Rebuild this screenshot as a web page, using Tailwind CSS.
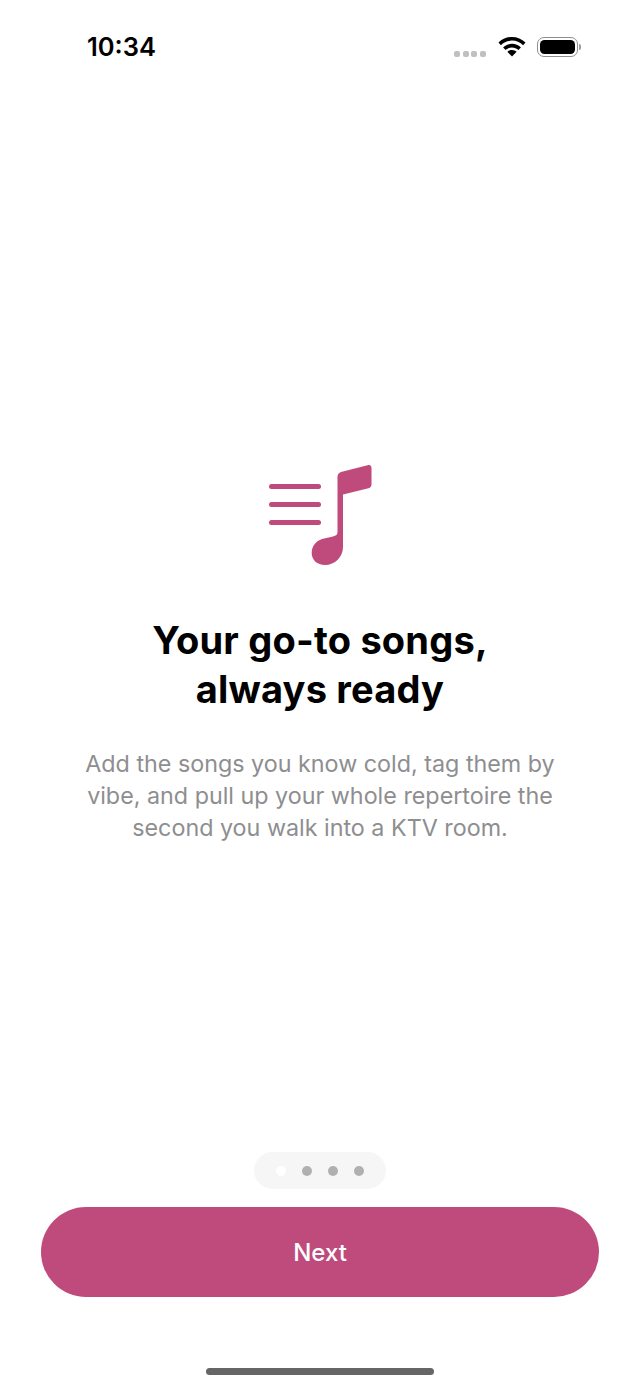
<!doctype html>
<html>
<head>
<meta charset="utf-8">
<script src="https://cdn.jsdelivr.net/npm/@tailwindcss/browser@4"></script>
</head>
<body class="bg-white">
<div class="flex flex-col w-[640px] h-[1387px] overflow-hidden bg-white font-['Inter',sans-serif]">
  <div class="flex items-center justify-between h-[28px] mt-[33px] pl-[87px] pr-[59px]">
    <span class="text-[25.5px] leading-[28px] font-semibold text-black">10:34</span>
    <div class="flex items-center">
      <div class="flex gap-[2.6px] mt-[14px] mr-[11px]">
        <span class="size-[6px] rounded-[2px] bg-[#c0c0c0]"></span>
        <span class="size-[6px] rounded-[2px] bg-[#c0c0c0]"></span>
        <span class="size-[6px] rounded-[2px] bg-[#c0c0c0]"></span>
        <span class="size-[6px] rounded-[2px] bg-[#c0c0c0]"></span>
      </div>
      <svg class="mr-[10px] -mt-[2px]" width="30" height="22" viewBox="0 0 30 22" fill="#000">
        <path d="M15 2C9.800 2 5.200 4 1.500 7.500L3.900 10.200C6.800 7.400 10.700 5.600 15 5.600s8.200 1.800 11.100 4.600l2.400-2.700C24.800 4 20.200 2 15 2Z"/>
        <path d="M15 8.800c-3.400 0-6.500 1.300-8.900 3.600l2.500 2.700c1.700-1.600 3.900-2.600 6.400-2.600s4.700 1 6.400 2.600l2.500-2.700C21.500 10.100 18.400 8.800 15 8.800Z"/>
        <path d="M15 15c-1.800 0-3.400.7-4.600 1.800L15 21.600l4.600-4.800C18.400 15.700 16.800 15 15 15Z"/>
      </svg>
      <div class="flex items-center">
        <div class="w-[41px] h-[20px] rounded-[7px] border-[1.5px] border-[#8e8e8e] p-[2px]">
          <div class="w-full h-full rounded-[4.5px] bg-black"></div>
        </div>
        <div class="w-[2px] h-[6px] rounded-r-full bg-[#9a9a9a] ml-[1px]"></div>
      </div>
    </div>
  </div>

  <div class="flex flex-col items-center mt-[402px]">
    <svg width="104" height="102" viewBox="0 0 104 102" fill="#bf4b7d">
      <rect x="1" y="21" width="52" height="5" rx="2.5"/>
      <rect x="1" y="39" width="52" height="5" rx="2.5"/>
      <rect x="1" y="57" width="52" height="5" rx="2.5"/>
      <path d="M69.500 14C69.500 11 71 9.500 73 8.900L99.500 2.200C102 1.600 103.500 2.500 103.500 5V21C103.500 23.500 102.500 24.700 100.500 25.200L75 31.500V84C75 94 67 102 57 102C49 102 43.700 97 43.700 90C43.700 83 48 78 54 76L65 73.500C68 72.800 69.500 71.500 69.500 69Z"/>
    </svg>
    <h1 class="mt-[51px] text-[38px] leading-[49px] font-bold text-black text-center tracking-[0.2px]">Your go-to songs,<br>always ready</h1>
    <p class="mt-[34px] text-[23.3px] leading-[32px] text-[#8e8e90] text-center">Add the songs you know cold, tag them by<br>vibe, and pull up your whole repertoire the<br>second you walk into a KTV room.</p>
  </div>

  <div class="flex flex-col items-center mt-auto">
    <div class="flex items-center justify-center gap-[16px] w-[132px] h-[37px] rounded-full bg-[#f6f6f6]">
      <span class="size-[10px] rounded-full bg-white"></span>
      <span class="size-[10px] rounded-full bg-[#b0b0b0]"></span>
      <span class="size-[10px] rounded-full bg-[#b0b0b0]"></span>
      <span class="size-[10px] rounded-full bg-[#b0b0b0]"></span>
    </div>
    <button class="mt-[18px] pt-[2px] w-[558px] h-[90px] rounded-[45px] bg-[#bf4b7d] text-white text-[24px] font-medium">Next</button>
    <div class="mt-[71px] mb-[12px] w-[228px] h-[7px] rounded-full bg-[#666666]"></div>
  </div>
</div>
</body>
</html>
